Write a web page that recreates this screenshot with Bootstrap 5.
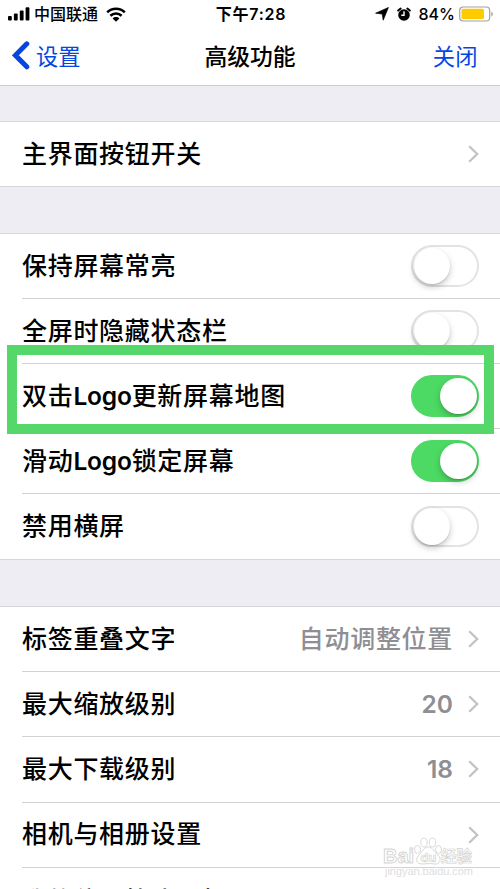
<!DOCTYPE html>
<html lang="zh-CN">
<head>
<meta charset="utf-8">
<meta name="viewport" content="width=device-width, initial-scale=1">
<title>高级功能</title>
<link href="https://cdn.jsdelivr.net/npm/bootstrap@5.3.0/dist/css/bootstrap.min.css" rel="stylesheet">
<style>
  html, body { height: 889px; overflow: hidden; }
  body { font-family: Inter, "Noto Sans CJK SC", sans-serif; background: #fff; color: #000; }
  .screen { width: 500px; height: 889px; }
  .blue { color: #0546e0; }
  .status-bar { height: 28px; font-size: 16px; font-weight: 500; line-height: 28px; }
  .status-bar > div { height: 28px; }
  .indicators { padding-right: 6px; }
  .clock { font-weight: 600; font-size: 16px; letter-spacing: .75px; padding-left: 2px; }
  .title-bar { height: 58px; border-bottom: 1px solid #cbcbd0; font-size: 22.3px; line-height: 57px; }
  .title-bar .page-title { font-weight: 500; font-size: 22.8px; }
  .title-bar svg { margin-bottom: 1px; }
  .back-label { margin-left: 6px; }
  .close-label { padding-right: 22.5px; }
  .spacer { background: #eeedf3; border-bottom: 1px solid #d6d6d9; }
  .spacer-sm { height: 36px; }
  .spacer-lg { height: 48px; border-top: 1px solid #d6d6d9; }
  .setting { height: 65px; margin-left: 22px; padding-right: 21px; border-bottom: 1px solid #d2d2d5; font-size: 25px; font-weight: 500; letter-spacing: .7px; line-height: 1; }
  .setting.solo { height: 64px; }
  .more .setting { height: 65.2px; }
  .more .setting:last-child { padding-top: 1.6px; }
  .setting:last-child { border-bottom: 0; }
  .setting .value { color: #8e8e93; margin-right: 15px; }
  .setting .number { font-weight: 600; font-size: 24.5px; letter-spacing: 0; }
  .latin { font-weight: 600; font-size: 24.5px; letter-spacing: -.2px; }
  .switch { width: 68px; height: 41.5px; border-radius: 21px; border: 2.5px solid #e3e3e3; padding: 0 .5px; }
  .switch i { width: 36.5px; height: 36.5px; border-radius: 50%; background: #fff; box-shadow: 0 3px 6px rgba(0,0,0,.22), 0 1px 1px rgba(0,0,0,.12); }
  .switch.on { background: #4cd964; border-color: #4cd964; }
  .highlight { left: 7px; top: 345px; width: 487px; height: 89px; border: 10px solid #55d769; z-index: 3; }
  .watermark { left: 381px; top: 834px; z-index: 2; }
</style>
</head>
<body>
<div class="screen position-relative overflow-hidden">
  <header>
    <div class="status-bar row g-0">
      <div class="col-4 d-flex align-items-center ps-2">
        <svg width="22" height="14" viewBox="0 0 22 14"><rect x="0" y="9" width="3.8" height="4.5" rx="1"/><rect x="5.9" y="6.5" width="3.8" height="7" rx="1"/><rect x="11.8" y="3.5" width="3.8" height="10" rx="1"/><rect x="17.6" y="0.3" width="3.8" height="13.2" rx="1"/></svg>
        <span class="carrier ms-1">中国联通</span>
        <svg class="ms-2" width="20" height="15" viewBox="0 0 20 15" fill="none" stroke="#000" stroke-width="2.6"><path d="M1.2 5.4C6 .6 14 .6 18.8 5.4M4.4 8.8c3.1-3 8.1-3 11.2 0"/><path fill="#000" stroke="none" d="M6.6 11.4c1.9-1.8 4.9-1.8 6.8 0L10 14.8z"/></svg>
      </div>
      <div class="col-4 text-center clock">下午7:28</div>
      <div class="col-4 d-flex align-items-center justify-content-end indicators">
        <svg width="14" height="14" viewBox="0 0 14 14"><path d="M13.4.5 8.2 13.2 7.2 7 .6 6.2z" stroke="#000" stroke-width=".7"/></svg>
        <svg class="ms-2" width="14" height="15" viewBox="0 0 14 15"><circle cx="7" cy="8" r="5.8"/><path d="M1.2 3.6 3.6 1.6M12.8 3.6 10.4 1.6" stroke="#000" stroke-width="2" stroke-linecap="round"/><path d="M7 4.2V8.3H4.3" fill="none" stroke="#fff" stroke-width="1.4"/></svg>
        <span class="percent ms-2">84%</span>
        <svg class="ms-1" width="35" height="16" viewBox="0 0 35 16"><rect x=".7" y="1" width="30" height="14" rx="3.5" fill="#fff" stroke="#a2a2a4" stroke-width="1.2"/><rect x="2.5" y="2.8" width="22.5" height="10.3" rx="1.5" fill="#fecb00"/><path d="M32.3 5.8c2.1.8 2.1 3.8 0 4.6z" fill="#a2a2a4"/></svg>
      </div>
    </div>
    <nav class="title-bar row g-0">
      <div class="col-4 d-flex align-items-center blue ps-2">
        <svg class="ms-1" width="18" height="30" viewBox="0 0 18 30" fill="none" stroke="#0546e0" stroke-width="5" stroke-linecap="round" stroke-linejoin="miter"><path d="M14.8 2.8 3.4 14.3 14.8 25.8"/></svg>
        <span class="back-label">设置</span>
      </div>
      <div class="col-4 text-center page-title">高级功能</div>
      <div class="col-4 text-end blue close-label">关闭</div>
    </nav>
  </header>
  <main>
    <div class="spacer spacer-sm"></div>
    <section>
      <div class="setting solo d-flex align-items-center justify-content-between"><span>主界面按钮开关</span><svg width="11" height="18" viewBox="0 0 11 18" fill="none" stroke="#c2c2c7" stroke-width="2.3"><path d="m1.2 1.2 8 7.8-8 7.8"/></svg></div>
    </section>
    <div class="spacer spacer-lg"></div>
    <section>
      <div class="setting d-flex align-items-center justify-content-between"><span>保持屏幕常亮</span><div class="switch d-flex align-items-center"><i></i></div></div>
      <div class="setting d-flex align-items-center justify-content-between"><span>全屏时隐藏状态栏</span><div class="switch d-flex align-items-center"><i></i></div></div>
      <div class="setting d-flex align-items-center justify-content-between"><span>双击<span class="latin">Logo</span>更新屏幕地图</span><div class="switch on d-flex align-items-center justify-content-end"><i></i></div></div>
      <div class="setting d-flex align-items-center justify-content-between"><span>滑动<span class="latin">Logo</span>锁定屏幕</span><div class="switch on d-flex align-items-center justify-content-end"><i></i></div></div>
      <div class="setting d-flex align-items-center justify-content-between"><span>禁用横屏</span><div class="switch d-flex align-items-center"><i></i></div></div>
    </section>
    <div class="spacer spacer-lg"></div>
    <section class="more">
      <div class="setting d-flex align-items-center"><span class="me-auto">标签重叠文字</span><span class="value">自动调整位置</span><svg width="11" height="18" viewBox="0 0 11 18" fill="none" stroke="#c2c2c7" stroke-width="2.3"><path d="m1.2 1.2 8 7.8-8 7.8"/></svg></div>
      <div class="setting d-flex align-items-center"><span class="me-auto">最大缩放级别</span><span class="value number">20</span><svg width="11" height="18" viewBox="0 0 11 18" fill="none" stroke="#c2c2c7" stroke-width="2.3"><path d="m1.2 1.2 8 7.8-8 7.8"/></svg></div>
      <div class="setting d-flex align-items-center"><span class="me-auto">最大下载级别</span><span class="value number">18</span><svg width="11" height="18" viewBox="0 0 11 18" fill="none" stroke="#c2c2c7" stroke-width="2.3"><path d="m1.2 1.2 8 7.8-8 7.8"/></svg></div>
      <div class="setting d-flex align-items-center"><span class="me-auto">相机与相册设置</span><svg width="11" height="18" viewBox="0 0 11 18" fill="none" stroke="#c2c2c7" stroke-width="2.3"><path d="m1.2 1.2 8 7.8-8 7.8"/></svg></div>
      <div class="setting d-flex align-items-center"><span>我的位置箭头图标</span></div>
    </section>
  </main>
  <div class="highlight position-absolute"></div>
  <svg class="watermark position-absolute" width="96" height="46" viewBox="0 0 96 46" fill="#fff" stroke="#d4d4d4" stroke-width=".9" font-family="Liberation Sans, Noto Sans CJK SC, sans-serif">
    <text x="2" y="29" font-size="20" font-weight="700" textLength="31" lengthAdjust="spacingAndGlyphs">Bai</text>
    <ellipse cx="36.5" cy="15.5" rx="3" ry="4"/><ellipse cx="43" cy="8.5" rx="3.2" ry="4.4"/><ellipse cx="51.5" cy="8.5" rx="3.2" ry="4.4"/><ellipse cx="57.5" cy="15.5" rx="3" ry="4"/>
    <path d="M47 13c-5 0-5 5-9 8-4 4-3 9 3 9 4 0 8-1 12 0 6 1 8-5 4-9-4-3-5-8-10-8z"/>
    <text x="39.5" y="27.5" font-size="13" font-weight="700" stroke-width=".7">du</text>
    <text x="60" y="28" font-size="15.5" font-weight="700" stroke-width=".7">经验</text>
    <text x="4" y="41" font-size="11" textLength="88" fill="#dedede" stroke="none">jingyan.baidu.com</text>
  </svg>
</div>
<script src="https://cdn.jsdelivr.net/npm/bootstrap@5.3.0/dist/js/bootstrap.bundle.min.js"></script>
</body>
</html>
